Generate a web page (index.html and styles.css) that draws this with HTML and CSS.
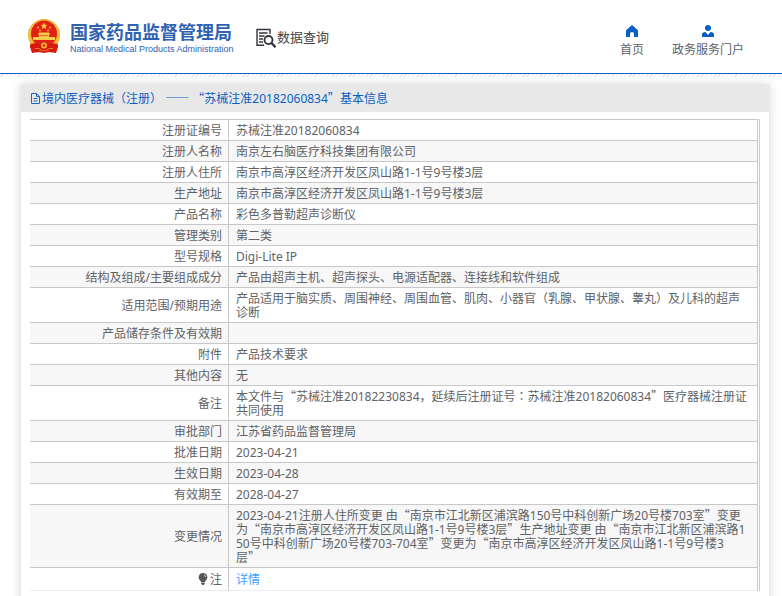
FILE: index.html
```html
<!DOCTYPE html>
<html lang="zh-CN">
<head>
<meta charset="utf-8">
<title>境内医疗器械（注册）</title>
<link rel="stylesheet" href="styles.css">
</head>
<body>
<header class="top">
  <div class="brand">
    <svg class="emblem" viewBox="0 0 34 36" aria-hidden="true">
      <path d="M4 24h26l1 5-2 6-7-1-5 1-5-1-7 1-2-6z" fill="#dc1c10"/>
      <circle cx="17" cy="17" r="16" fill="#f0b02c"/>
      <circle cx="17" cy="17" r="14.500" fill="none" stroke="#f8d050"/>
      <circle cx="17" cy="15.500" r="13" fill="#e02214"/>
      <path d="M17 4.500l1 2.200 2.400.2-1.800 1.600.6 2.400-2.200-1.200-2.200 1.200.6-2.400-1.800-1.600 2.400-.2z" fill="#fbc83c"/>
      <g fill="#f6b032"><circle cx="11" cy="9.500" r="1"/><circle cx="23" cy="9.500" r="1"/><circle cx="13" cy="12.500" r="1"/><circle cx="21" cy="12.500" r="1"/></g>
      <path d="M12 14.500h10l1 2.500h-1v2h6v3H6v-3h6v-2h-1z" fill="#f8cc48"/>
      <path d="M12.500 17.500h9" stroke="#dc5a1a" stroke-width=".8"/>
      <path d="M3.500 26c4-1.500 9-1 10.500 1h6c1.500-2 6.500-2.500 10.500-1l.5 3-4 2-1 3-4-1.500H12L8 34l-1-3-4-2z" fill="#d81a0e"/>
      <circle cx="17" cy="27.500" r="3" fill="#f4b936"/>
      <circle cx="17" cy="27.500" r="1.300" fill="#d81e10"/>
      <path d="M8 30.500q4-.5 6 1M26 30.500q-4-.5-6 1" stroke="#f0a02c" stroke-width=".8" fill="none"/>
    </svg>
    <div class="brand-text">
      <strong>国家药品监督管理局</strong>
      <span>National Medical Products Administration</span>
    </div>
  </div>
  <div class="query">
    <svg viewBox="0 0 20 20" aria-hidden="true" fill="none" stroke="#33333f">
      <path d="M8 17.200H1V1.500h13V6" stroke-width="1.400"/>
      <path d="M3 5h8.500M3 8h5.500M3 11h4M3 14h4" stroke-width="1.300"/>
      <circle cx="12.500" cy="12" r="4" stroke-width="1.800"/>
      <path d="M15.500 15l4 4.200" stroke-width="2.400"/>
    </svg>
    <span>数据查询</span>
  </div>
  <nav class="nav">
    <a href="#home"><svg viewBox="0 0 12 12" aria-hidden="true"><path d="M6 0l6 5.300V12H8V8.500Q8 7 6 7T4 8.500V12H0V5.300z" fill="#0a5fc4"/></svg><span>首页</span></a>
    <a href="#portal"><svg viewBox="0 0 12 12" aria-hidden="true" fill="#0a5fc4"><circle cx="6" cy="3" r="3"/><path d="M0 12V9.500Q0 7 3.500 7L6 10l2.500-3Q12 7 12 9.500V12z"/></svg><span>政务服务门户</span></a>
  </nav>
</header>
<main class="panel">
  <h1 class="title">
    <svg viewBox="0 0 11 11" aria-hidden="true" fill="none" stroke="#1f66c4"><path d="M1.500.5h5l3 3v7h-8zM6.500.5v3h3M3.500 5.500h4M3.500 8h4"/></svg>
    <span>境内医疗器械<i class="mid" lang="zh-TW">（</i>注册<i class="mid" lang="zh-TW">）</i> <i>——</i> <i>“</i>苏械注准20182060834<i>”</i>基本信息</span>
  </h1>
  <div class="content">
    <table class="detail">
      <tbody>
        <tr><th scope="row">注册证编号</th><td>苏械注准20182060834</td></tr>
        <tr><th scope="row">注册人名称</th><td>南京左右脑医疗科技集团有限公司</td></tr>
        <tr><th scope="row">注册人住所</th><td>南京市高淳区经济开发区凤山路1-1号9号楼3层</td></tr>
        <tr><th scope="row">生产地址</th><td>南京市高淳区经济开发区凤山路1-1号9号楼3层</td></tr>
        <tr><th scope="row">产品名称</th><td>彩色多普勒超声诊断仪</td></tr>
        <tr><th scope="row">管理类别</th><td>第二类</td></tr>
        <tr><th scope="row">型号规格</th><td>Digi-Lite IP</td></tr>
        <tr><th scope="row">结构及组成/主要组成成分</th><td>产品由超声主机、超声探头、电源适配器、连接线和软件组成</td></tr>
        <tr><th scope="row">适用范围/预期用途</th><td>产品适用于脑实质、周围神经、周围血管、肌肉、小器官<i class="mid" lang="zh-TW">（</i>乳腺、甲状腺、睾丸<i class="mid" lang="zh-TW">）</i>及儿科的超声诊断</td></tr>
        <tr><th scope="row">产品储存条件及有效期</th><td></td></tr>
        <tr><th scope="row">附件</th><td>产品技术要求</td></tr>
        <tr><th scope="row">其他内容</th><td>无</td></tr>
        <tr><th scope="row">备注</th><td>本文件与<i>“</i>苏械注准20182230834，延续后注册证号<i class="mid" lang="zh-TW">：</i>苏械注准20182060834<i>”</i>医疗器械注册证共同使用</td></tr>
        <tr><th scope="row">审批部门</th><td>江苏省药品监督管理局</td></tr>
        <tr><th scope="row">批准日期</th><td>2023-04-21</td></tr>
        <tr><th scope="row">生效日期</th><td>2023-04-28</td></tr>
        <tr><th scope="row">有效期至</th><td>2028-04-27</td></tr>
        <tr><th scope="row">变更情况</th><td>2023-04-21注册人住所变更 由<i>“</i>南京市江北新区浦滨路150号中科创新广场20号楼703室<i>”</i>变更为<i>“</i>南京市高淳区经济开发区凤山路1-1号9号楼3层<i>”</i>生产地址变更 由<i>“</i>南京市江北新区浦滨路150号中科创新广场20号楼703-704室<i>”</i>变更为<i>“</i>南京市高淳区经济开发区凤山路1-1号9号楼3<br>层<i>”</i></td></tr>
        <tr class="note"><th scope="row"><svg viewBox="0 0 10 12" aria-hidden="true"><path d="M5 0a4.300 4.300 0 0 1 2.500 7.800L7 9H3L2.500 7.800A4.300 4.300 0 0 1 5 0zM3.200 9.500h3.600v1L5.800 12H4.200l-1-1.500z" fill="#55565a"/><path d="M6 1.800q1.500.7 1.500 2.200" stroke="#fff" stroke-width=".8" fill="none"/></svg>注</th><td><a href="#detail">详情</a></td></tr>
      </tbody>
    </table>
  </div>
</main>
</body>
</html>
```
FILE: styles.css
```css
* {
  box-sizing: border-box;
}

body {
  margin: 0;
  background: #fff;
  color: #606266;
  font: 12px/14px "Noto Sans", "Noto Sans CJK SC", sans-serif;
}

a {
  color: inherit;
  text-decoration: none;
}

svg {
  display: block;
  flex: none;
}

/* Full-width punctuation */
i {
  font-family: "Noto Sans CJK SC", sans-serif;
  font-style: normal;
  line-height: 0;
}

i.mid {
  font-family: "Noto Sans CJK TC", sans-serif;
}

.top {
  display: flex;
  height: 74px;
  padding: 0 38px 0 27px;
  border-bottom: 1px solid #0a64c8;
}

.brand {
  display: flex;
  gap: 9px;
  padding-top: 18px;
}

.emblem {
  width: 34px;
  height: 36px;
}

.brand-text {
  display: flex;
  flex-direction: column;
  width: 162px;
  padding-top: 4px;
  color: #2f62b0;
  white-space: nowrap;
}

.brand-text strong {
  font-size: 18px;
  line-height: 20px;
}

.brand-text span {
  font: 9px/14px "Liberation Sans", sans-serif;
}

.query {
  display: flex;
  gap: 1px;
  padding: 28px 0 0 24px;
  color: #444;
  font-size: 13px;
  line-height: 18px;
}

.query svg {
  width: 20px;
  height: 20px;
}

.nav {
  display: flex;
  gap: 28px;
  margin-left: auto;
  padding-top: 25px;
}

.nav a {
  display: flex;
  flex-direction: column;
  align-items: center;
  gap: 6px;
}

.nav svg {
  width: 12px;
  height: 12px;
}

.top::after {
  content: "";
  position: absolute;
  top: 74px;
  left: 0;
  right: 0;
  height: 3px;
  background: repeating-linear-gradient(135deg, #fff 0 2px, #e4e4e4 2px 3px);
}

.panel {
  margin: 10px 12px 0 20px;
  border: 1px solid #ebebef;
  box-shadow: 0 0 10px rgba(0, 0, 0, 0.14);
}

.title {
  display: flex;
  align-items: center;
  gap: 1px;
  height: 27px;
  margin: 0;
  padding-left: 9px;
  background: #e8e8e8;
  color: #0a5fc4;
  font-size: 12px;
  font-weight: 400;
}

.title svg {
  width: 11px;
  height: 11px;
}

.content {
  padding: 7px 9px 20px;
}

.detail {
  width: 100%;
  border-collapse: separate;
  border-spacing: 0;
  border-right: 1px solid #c8c8d0;
  padding-right: 1px;
  table-layout: fixed;
}

.detail th,
.detail td {
  padding: 4px 6px 2px;
  border-top: 1px solid #c8c8c8;
  border-right: 1px solid #c8c8c8;
  height: 21px;
  vertical-align: middle;
  word-break: break-all;
}

.detail td {
  padding-left: 7px;
}

.detail th {
  width: 199px;
  font-weight: 400;
  text-align: right;
}

.detail tr:nth-child(even) {
  background: #f7f7f7;
}

.detail .note th,
.detail .note td {
  height: 24px;
  border-bottom: 1px solid #ebebf3;
}

.note svg {
  display: inline-block;
  width: 10px;
  height: 12px;
  margin-right: 2px;
  vertical-align: -1px;
}

.note a {
  color: #409eff;
}
```
